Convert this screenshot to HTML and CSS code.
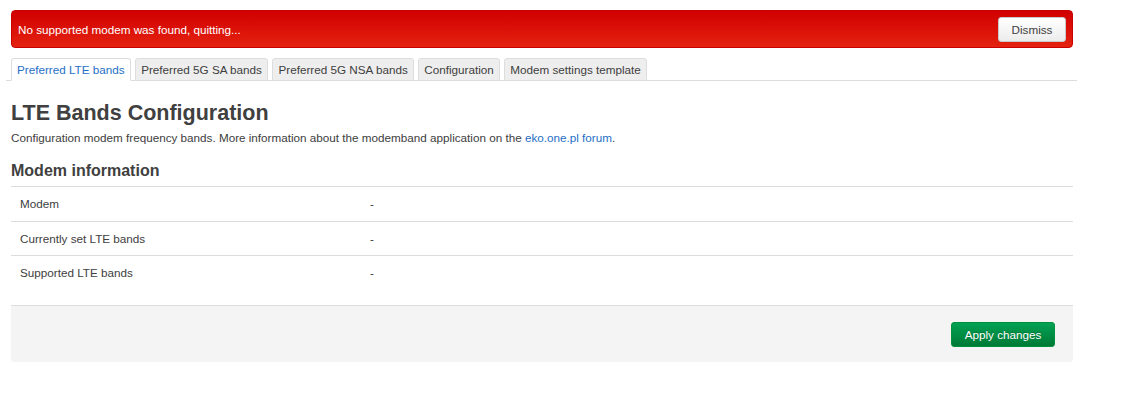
FILE: index.html
```html
<!DOCTYPE html>
<html>
<head>
<meta charset="utf-8">
<link rel="stylesheet" href="styles.css">
</head>
<body>
<div class="page">
  <div class="alert">
    <span class="alert-text">No supported modem was found, quitting...</span>
    <button class="btn-dismiss">Dismiss</button>
  </div>
  <ul class="tabs">
    <li class="tab active">Preferred LTE bands</li>
    <li class="tab">Preferred 5G SA bands</li>
    <li class="tab">Preferred 5G NSA bands</li>
    <li class="tab">Configuration</li>
    <li class="tab">Modem settings template</li>
  </ul>
  <h2 class="title">LTE Bands Configuration</h2>
  <p class="desc">Configuration modem frequency bands. More information about the modemband application on the <a class="link" href="#">eko.one.pl forum</a>.</p>
  <h3 class="section-title">Modem information</h3>
  <div class="info-table">
    <div class="row"><div class="cell-label">Modem</div><div class="cell-value">-</div></div>
    <div class="row"><div class="cell-label">Currently set LTE bands</div><div class="cell-value">-</div></div>
    <div class="row"><div class="cell-label">Supported LTE bands</div><div class="cell-value">-</div></div>
  </div>
  <div class="actions">
    <button class="btn-apply">Apply changes</button>
  </div>
</div>
</body>
</html>
```

FILE: styles.css
```css
html, body {
  margin: 0;
  padding: 0;
  background: #fff;
}
body {
  font-family: "Liberation Sans", Arial, sans-serif;
  font-size: 11.7px;
  color: #404040;
}
.page {
  width: 1062px;
  padding: 10px 0 0 11px;
}
.alert {
  box-sizing: border-box;
  height: 38px;
  display: flex;
  align-items: center;
  justify-content: space-between;
  padding: 0 6px 0 6px;
  background: linear-gradient(to bottom, #d10000, #e4220f);
  border: 1px solid #c80000;
  border-radius: 4px;
}
.alert-text {
  color: #fff;
  font-size: 11.7px;
}
.btn-dismiss {
  box-sizing: border-box;
  width: 68px;
  height: 25px;
  margin-top: 1px;
  font-family: "Liberation Sans", Arial, sans-serif;
  font-size: 11.7px;
  color: #404040;
  background: linear-gradient(to bottom, #ffffff, #ececec);
  border: 1px solid #c8c8c8;
  border-radius: 3px;
  padding: 0;
}
.tabs {
  list-style: none;
  margin: 10px -4px 0 -5px;
  padding: 0 0 0 5px;
  display: flex;
  gap: 4.5px;
  border-bottom: 1px solid #dddddd;
}
.tab {
  box-sizing: border-box;
  height: 23px;
  line-height: 21px;
  padding: 0 5px;
  margin-bottom: -1px;
  background: #eeeeee;
  border: 1px solid #dddddd;
  border-radius: 3px 3px 0 0;
  color: #404040;
}
.tab.active {
  background: #fff;
  border-bottom-color: #fff;
  color: #1f6fc5;
}
.title {
  margin: 19px 0 0 0;
  font-size: 21.5px;
  line-height: 26px;
  font-weight: bold;
}
.desc {
  margin: 3px 0 0 0;
  line-height: 18px;
}
.link {
  color: #1f6fc5;
  text-decoration: none;
}
.section-title {
  margin: 14px 0 0 0;
  font-size: 16px;
  line-height: 20px;
  font-weight: bold;
}
.info-table {
  margin-top: 5px;
}
.row {
  box-sizing: border-box;
  display: grid;
  grid-template-columns: 359px 1fr;
  height: 34.5px;
  align-items: center;
  border-top: 1px solid #dddddd;
}
.cell-label {
  padding-left: 9px;
}
.actions {
  box-sizing: border-box;
  margin-top: 15px;
  height: 57px;
  background: #f4f4f4;
  border-top: 1px solid #dddddd;
  border-radius: 0 0 3px 3px;
  display: flex;
  justify-content: flex-end;
  align-items: flex-start;
  padding: 16px 18px 0 0;
}
.btn-apply {
  box-sizing: border-box;
  width: 104px;
  height: 25px;
  font-family: "Liberation Sans", Arial, sans-serif;
  font-size: 11.7px;
  color: #fff;
  background: linear-gradient(to bottom, #00a153, #007a36);
  border: 1px solid #00913f;
  border-radius: 3px;
  padding: 0;
  text-shadow: 0 -1px 0 rgba(0,0,0,0.2);
}
```
